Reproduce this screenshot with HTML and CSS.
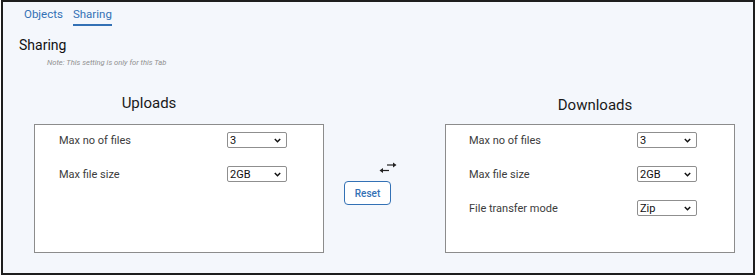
FILE: index.html
```html
<!DOCTYPE html>
<html>
<head>
  <meta name="viewport" content="width=device-width, initial-scale=1">
  <title>Sharing Settings</title>
  <link rel="stylesheet" href="styles.css">
</head>
<body>
  <div class="frame">
    <div class="tabs">
      <span class="tab">Objects</span>
      <span class="tab active">Sharing</span>
    </div>
    <h2 class="section-title">Sharing</h2>
    <p class="note">Note: This setting is only for this Tab</p>

    <div class="panels">
      <div class="panel uploads">
        <h3 class="panel-title">Uploads</h3>
        <div class="panel-box">
          <div class="row">
            <span class="label">Max no of files</span>
            <div class="select"><span>3</span>
              <svg class="chev" width="7" height="5" viewBox="0 0 7 5"><path d="M0.8 1 L3.5 3.7 L6.2 1" fill="none" stroke="#111" stroke-width="1.5"/></svg>
            </div>
          </div>
          <div class="row">
            <span class="label">Max file size</span>
            <div class="select"><span>2GB</span>
              <svg class="chev" width="7" height="5" viewBox="0 0 7 5"><path d="M0.8 1 L3.5 3.7 L6.2 1" fill="none" stroke="#111" stroke-width="1.5"/></svg>
            </div>
          </div>
        </div>
      </div>

      <div class="middle">
        <svg class="swap" width="18" height="10" viewBox="0 0 18 10">
          <path d="M8 3 H15" stroke="#222" stroke-width="1.2"/>
          <path d="M14 0.5 L17.5 3 L14 5.5 Z" fill="#222"/>
          <path d="M3 8.5 H10" stroke="#222" stroke-width="1.2"/>
          <path d="M4 6 L0.5 8.5 L4 11 Z" fill="#222"/>
        </svg>
        <button class="reset-btn">Reset</button>
      </div>

      <div class="panel downloads">
        <h3 class="panel-title">Downloads</h3>
        <div class="panel-box">
          <div class="row">
            <span class="label">Max no of files</span>
            <div class="select"><span>3</span>
              <svg class="chev" width="7" height="5" viewBox="0 0 7 5"><path d="M0.8 1 L3.5 3.7 L6.2 1" fill="none" stroke="#111" stroke-width="1.5"/></svg>
            </div>
          </div>
          <div class="row">
            <span class="label">Max file size</span>
            <div class="select"><span>2GB</span>
              <svg class="chev" width="7" height="5" viewBox="0 0 7 5"><path d="M0.8 1 L3.5 3.7 L6.2 1" fill="none" stroke="#111" stroke-width="1.5"/></svg>
            </div>
          </div>
          <div class="row">
            <span class="label">File transfer mode</span>
            <div class="select"><span>Zip</span>
              <svg class="chev" width="7" height="5" viewBox="0 0 7 5"><path d="M0.8 1 L3.5 3.7 L6.2 1" fill="none" stroke="#111" stroke-width="1.5"/></svg>
            </div>
          </div>
        </div>
      </div>
    </div>
  </div>
</body>
</html>
```

FILE: styles.css
```css
* { box-sizing: border-box; }
body {
  margin: 0;
  font-family: Roboto, "Liberation Sans", sans-serif;
  background: #fff;
}
.frame {
  margin-left: 1px;
  width: 754px;
  height: 275px;
  border: 2px solid #1e1e1e;
  background: #f4f7fc;
  overflow: hidden;
}
.tabs {
  display: flex;
  gap: 10px;
  padding: 5px 0 0 21px;
}
.tab {
  font-size: 11.5px;
  line-height: 14px;
  color: #3371b5;
  padding-bottom: 3px;
  border-bottom: 2px solid transparent;
}
.tab.active { border-bottom-color: #3371b5; }
.section-title {
  margin: 11px 0 0 16px;
  font-size: 14px;
  line-height: 16px;
  font-weight: 400;
  color: #111;
}
.note {
  margin: 5px 0 0 44px;
  font-size: 7.6px;
  line-height: 9px;
  font-style: italic;
  color: #909090;
}
.panels {
  display: flex;
  align-items: flex-start;
  margin-top: 27px;
  padding-left: 31px;
}
.panel { width: 290px; }
.panel-title {
  margin: 0 0 12px;
  font-size: 15px;
  line-height: 18px;
  font-weight: 400;
  color: #1a1a1a;
  text-align: center;
}
.uploads .panel-title { padding-right: 60px; }
.downloads .panel-title { padding: 2px 0 0 10px; margin-bottom: 10px; }
.panel-box {
  height: 129px;
  border: 1px solid #8c8c8c;
  background: #fff;
  padding: 7px 0 0 24px;
  display: flex;
  flex-direction: column;
  gap: 18px;
}
.downloads .panel-box { padding-left: 23px; }
.row {
  display: flex;
  align-items: center;
  height: 16px;
}
.label {
  width: 168px;
  font-size: 11px;
  color: #3c3c3c;
}
.select {
  width: 60px;
  height: 16px;
  border: 1px solid #8f8f8f;
  border-radius: 2px;
  background: #fff;
  display: flex;
  align-items: center;
  justify-content: space-between;
  padding: 0 5px 0 2px;
  font-size: 11px;
  color: #111;
}
.chev { display: block; }
.middle {
  width: 121px;
  padding-top: 68px;
}
.swap {
  display: block;
  margin-left: 55px;
  overflow: visible;
}
.reset-btn {
  display: block;
  margin: 9px 0 0 20px;
  width: 47px;
  height: 24px;
  border: 1.5px solid #3371b5;
  border-radius: 4px;
  background: #fff;
  color: #3371b5;
  font-family: Roboto, "Liberation Sans", sans-serif;
  font-size: 10px;
  font-weight: 500;
  cursor: pointer;
  padding: 0;
}
```
